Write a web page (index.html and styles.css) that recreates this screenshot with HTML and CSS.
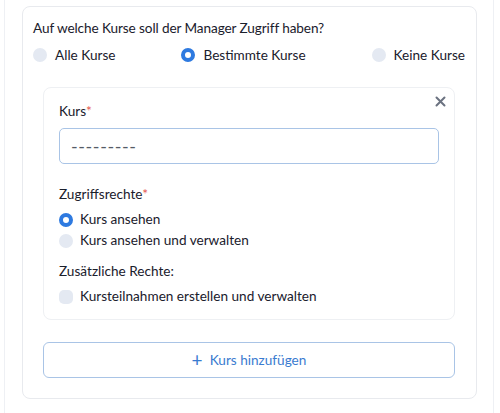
FILE: index.html
```html
<!DOCTYPE html>
<html lang="de">
<head>
<meta charset="utf-8">
<link rel="stylesheet" href="styles.css">
</head>
<body>
<div class="frame">
  <div class="card">
    <div class="question">Auf welche Kurse soll der Manager Zugriff haben?</div>
    <div class="scope">
      <label class="opt"><span class="radio"></span>Alle Kurse</label>
      <label class="opt"><span class="radio on"></span>Bestimmte Kurse</label>
      <label class="opt"><span class="radio"></span>Keine Kurse</label>
    </div>
    <div class="course">
      <button class="close" aria-label="Schließen">
        <svg width="11" height="11" viewBox="0 0 11 11"><path d="M1.5 1.5 L9.5 9.5 M9.5 1.5 L1.5 9.5" stroke="#6b7280" stroke-width="2" stroke-linecap="round"/></svg>
      </button>
      <div class="label">Kurs<span class="req">*</span></div>
      <div class="select">---------</div>
      <div class="label gap">Zugriffsrechte<span class="req">*</span></div>
      <div class="list">
        <label class="opt"><span class="radio on"></span>Kurs ansehen</label>
        <label class="opt"><span class="radio"></span>Kurs ansehen und verwalten</label>
      </div>
      <div class="label extra">Zusätzliche Rechte:</div>
      <div class="list check">
        <label class="opt"><span class="box"></span>Kursteilnahmen erstellen und verwalten</label>
      </div>
    </div>
    <button class="add"><span class="plus">+</span>Kurs hinzufügen</button>
  </div>
</div>
</body>
</html>
```
FILE: styles.css
```css
html, body {
  margin: 0;
  padding: 0;
  background: #ffffff;
}
body {
  font-family: Lato, "Noto Sans", sans-serif;
  font-size: 13.6px;
  color: #1a202c;
}
.frame {
  margin-left: 4px;
  width: 490px;
  min-height: 413px;
  border-left: 1px solid #eef0f4;
  border-right: 1px solid #eef0f4;
  padding: 6px 0 0 17px;
  box-sizing: border-box;
}
.card {
  width: 455px;
  box-sizing: border-box;
  border: 1px solid #e8eaee;
  border-radius: 8px;
  padding: 11px 10px 20px 10px;
}
.question {
  line-height: 20px;
  font-size: 13.6px;
  letter-spacing: -0.1px;
}
.scope {
  margin-top: 7px;
  display: flex;
  justify-content: space-between;
  padding-right: 1px;
}
.opt {
  display: flex;
  align-items: center;
  gap: 8px;
  line-height: 20px;
  font-size: 13.6px;
}
.radio {
  width: 14px;
  height: 14px;
  border-radius: 50%;
  background: #e4e9f2;
  box-sizing: border-box;
  flex: none;
}
.radio.on {
  background: #ffffff;
  border: 4.5px solid #2e7ae0;
}
.box {
  width: 14px;
  height: 14px;
  border-radius: 5px;
  background: #e4e9f2;
  flex: none;
}
.course {
  position: relative;
  margin: 22px 11px 0 10px;
  border: 1px solid #eef0f3;
  border-radius: 8px;
  padding: 13px 15px 12px 15px;
}
.close {
  position: absolute;
  top: 8px;
  right: 8px;
  width: 11px;
  height: 11px;
  padding: 0;
  border: 0;
  background: none;
  display: flex;
}
.label {
  line-height: 20px;
  font-size: 13.6px;
}
.req {
  color: #e5534b;
}
.select {
  margin-top: 7px;
  height: 36px;
  box-sizing: border-box;
  border: 1px solid #a9c4e6;
  border-radius: 5px;
  padding: 0 11px;
  display: flex;
  align-items: center;
  color: #555b66;
  font-size: 18px;
  letter-spacing: 0.6px;
}
.gap {
  margin-top: 20px;
}
.list {
  margin-top: 5px;
  display: flex;
  flex-direction: column;
}
.list .opt {
  line-height: 21px;
  gap: 7px;
}
.extra {
  margin-top: 10px;
}
.check {
  margin-top: 5px;
}
.add {
  margin: 22px 11px 0 10px;
  width: 412px;
  height: 36px;
  border: 1px solid #a9c4e6;
  border-radius: 6px;
  background: #ffffff;
  color: #3a7bd0;
  font-family: Lato, "Noto Sans", sans-serif;
  font-size: 13.6px;
  display: flex;
  align-items: center;
  justify-content: center;
  gap: 7px;
}
.plus {
  font-size: 19px;
  line-height: 1;
  margin-top: -2px;
}
```
